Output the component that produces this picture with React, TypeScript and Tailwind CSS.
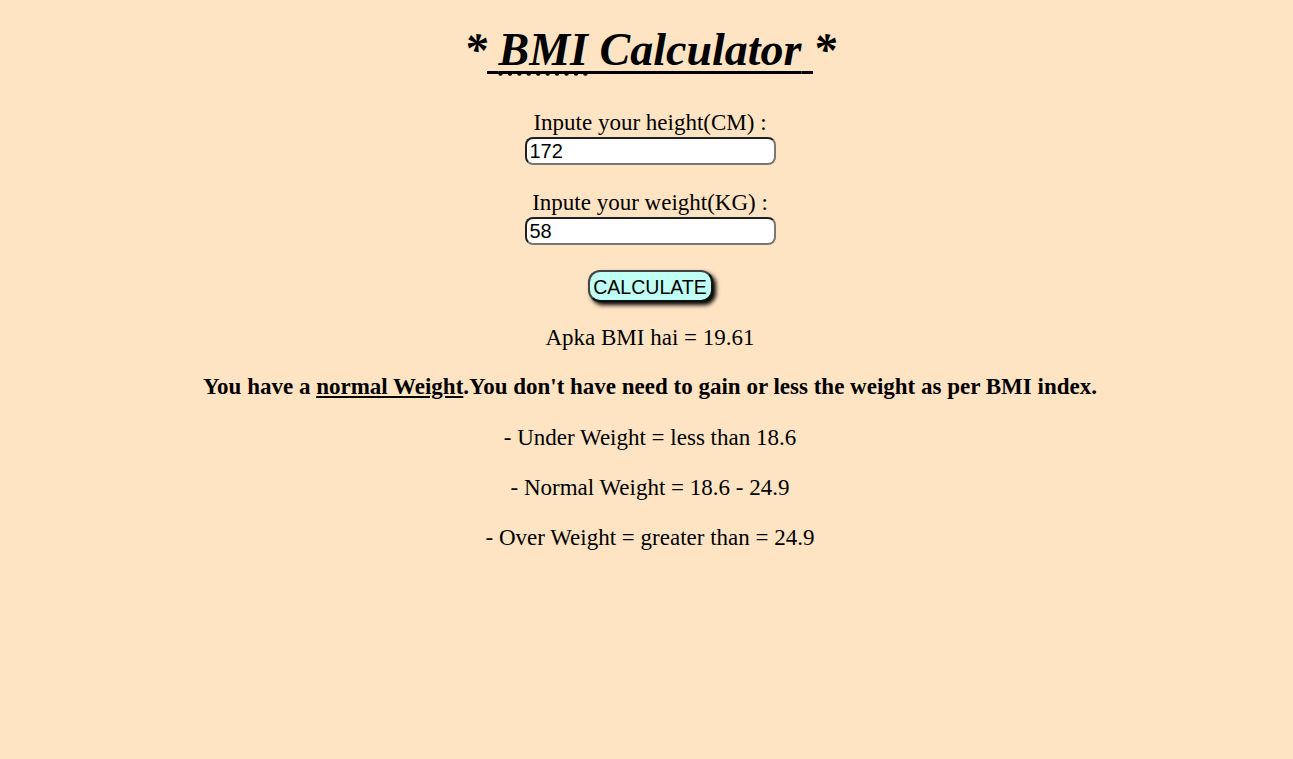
import React, { useState } from 'react';

export default function App() {
  const [height, setHeight] = useState('172');
  const [weight, setWeight] = useState('58');

  const serif = { fontFamily: '"Liberation Serif", "Times New Roman", serif' };
  const sans = { fontFamily: '"Liberation Sans", Arial, sans-serif' };

  return (
    <div className="min-h-[759px] w-full pl-[7px] bg-[#ffe4c4] text-black flex flex-col items-center" style={serif}>
      <h1 className="mt-[22px] text-[46px] leading-[56px] font-bold italic">
        *
        <span className="underline decoration-[3px] underline-offset-[6px]">
          {' '}
          <span className="underline decoration-dotted">BMI</span> Calculator{' '}
        </span>
        *
      </h1>

      <label className="mt-[32px] text-[23px] leading-[26px]">Inpute your height(CM) :</label>
      <input
        type="text"
        value={height}
        onChange={(e) => setHeight(e.target.value)}
        className="mt-px w-[251px] h-[28px] px-[3px] bg-white rounded-[8px] border-2 border-t-[#222] border-l-[#222] border-r-[#777] border-b-[#777] text-[20px] leading-none outline-none"
        style={sans}
      />

      <label className="mt-[25px] text-[23px] leading-[26px]">Inpute your weight(KG) :</label>
      <input
        type="text"
        value={weight}
        onChange={(e) => setWeight(e.target.value)}
        className="mt-px w-[251px] h-[28px] px-[3px] bg-white rounded-[8px] border-2 border-t-[#222] border-l-[#222] border-r-[#777] border-b-[#777] text-[20px] leading-none outline-none"
        style={sans}
      />

      <button
        className="mt-[25px] w-[125px] h-[32px] pt-[3px] rounded-[12px] bg-[#c0fff4] border-2 border-t-[#444] border-l-[#444] border-r-[#111] border-b-[#111] shadow-[3px_3px_4px_#000] text-[19.5px] leading-none"
        style={sans}
      >
        CALCULATE
      </button>

      <p className="mt-[23px] text-[23px] leading-[26px]">Apka BMI hai = 19.61</p>
      <p className="mt-[23px] text-[23px] leading-[26px] font-bold">
        You have a <span className="underline">normal Weight</span>.You don't have need to gain or less the weight as per BMI index.
      </p>
      <p className="mt-[25px] text-[23px] leading-[26px]">- Under Weight = less than 18.6</p>
      <p className="mt-[24px] text-[23px] leading-[26px]">- Normal Weight = 18.6 - 24.9</p>
      <p className="mt-[24px] text-[23px] leading-[26px]">- Over Weight = greater than = 24.9</p>
    </div>
  );
}
